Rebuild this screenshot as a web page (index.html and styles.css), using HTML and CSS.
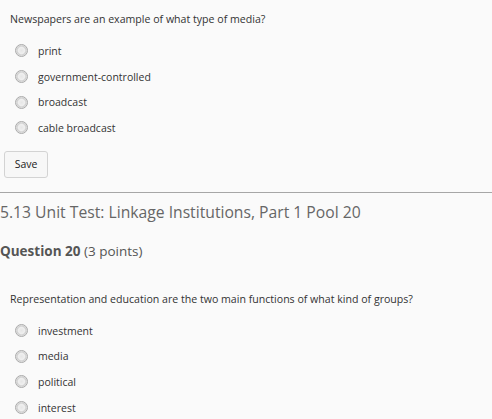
FILE: index.html
```html
<!DOCTYPE html>
<html>
<head>
<meta charset="utf-8">
<link rel="stylesheet" href="styles.css">
</head>
<body>
<div class="q">
  <p class="prompt">Newspapers are an example of what type of media?</p>
  <ul class="opts">
    <li><span class="radio"></span><span>print</span></li>
    <li><span class="radio"></span><span>government-controlled</span></li>
    <li><span class="radio"></span><span>broadcast</span></li>
    <li><span class="radio"></span><span>cable broadcast</span></li>
  </ul>
</div>
<div class="save-row"><button class="save">Save</button></div>
<hr class="divider">
<h2 class="title">5.13 Unit Test: Linkage Institutions, Part 1 Pool 20</h2>
<h3 class="qnum"><b>Question 20</b> (3 points)</h3>
<div class="q q2">
  <p class="prompt">Representation and education are the two main functions of what kind of groups?</p>
  <ul class="opts">
    <li><span class="radio"></span><span>investment</span></li>
    <li><span class="radio"></span><span>media</span></li>
    <li><span class="radio"></span><span>political</span></li>
    <li><span class="radio"></span><span>interest</span></li>
  </ul>
</div>
</body>
</html>
```
FILE: styles.css
```css
html, body { margin: 0; padding: 0; }
body {
  background: #fafafa;
  font-family: "Open Sans", "Liberation Sans", sans-serif;
  color: #333;
  width: 492px;
  height: 419px;
  overflow: hidden;
}
.q { padding: 0 0 0 10px; }
.prompt {
  margin: 0;
  padding-top: 11px;
  font-size: 10.6px;
  line-height: 16px;
  color: #333;
}
.opts {
  list-style: none;
  margin: 0;
  padding: 11px 0 0 5px;
}
.opts li {
  display: flex;
  align-items: center;
  height: 25.7px;
  font-size: 10.5px;
  color: #333;
}
.radio {
  width: 13px;
  height: 13px;
  border-radius: 50%;
  border: 1px solid #aaaaaa;
  background: radial-gradient(circle at 50% 50%, #e6e6e6 0, #efefef 40%, #cfcfcf 58%, #f6f6f6 80%);
  box-sizing: border-box;
  margin-right: 10px;
  flex: none;
}
.save-row { padding: 10px 0 0 4px; }
.save {
  width: 44px;
  height: 27px;
  border: 1px solid #d3d3d3;
  border-radius: 3px;
  background: #f7f7f7;
  font-family: inherit;
  font-size: 10.5px;
  color: #222;
  padding: 0;
}
.divider {
  margin: 14px 0 0 0;
  border: 0;
  border-top: 1px solid #a6a6a6;
  height: 0;
}
.title {
  margin: 0;
  padding-top: 9px;
  font-size: 15.7px;
  line-height: 20px;
  font-weight: normal;
  color: #666;
}
.qnum {
  margin: 0;
  padding-top: 20px;
  font-size: 13.5px;
  line-height: 18px;
  font-weight: normal;
  color: #555;
}
.qnum b { font-weight: bold; color: #555; }
.q2 .prompt { padding-top: 31px; }
```
